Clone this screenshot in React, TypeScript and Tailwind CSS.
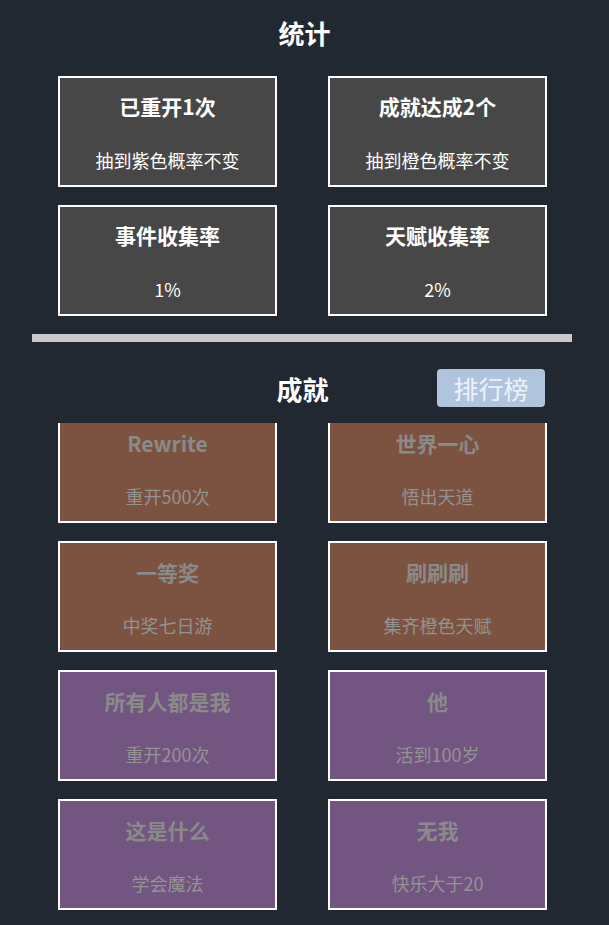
const stats = [
  { title: "已重开1次", desc: "抽到紫色概率不变" },
  { title: "成就达成2个", desc: "抽到橙色概率不变" },
  { title: "事件收集率", desc: "1%" },
  { title: "天赋收集率", desc: "2%" },
];

const achievements = [
  { title: "Rewrite", desc: "重开500次", tone: "orange" },
  { title: "世界一心", desc: "悟出天道", tone: "orange" },
  { title: "一等奖", desc: "中奖七日游", tone: "orange" },
  { title: "刷刷刷", desc: "集齐橙色天赋", tone: "orange" },
  { title: "所有人都是我", desc: "重开200次", tone: "purple" },
  { title: "他", desc: "活到100岁", tone: "purple" },
  { title: "这是什么", desc: "学会魔法", tone: "purple" },
  { title: "无我", desc: "快乐大于20", tone: "purple" },
];

export default function App() {
  return (
    <div
      className="w-full min-h-[925px] h-[925px] overflow-hidden bg-[#222831] text-white"
      style={{ fontFamily: '"Noto Sans CJK SC", "Noto Sans", sans-serif' }}
    >
      <div className="pt-[15px] text-center text-[26px] leading-[36px] font-bold">统计</div>

      {/* Stats */}
      <div className="mt-[25px] ml-[58px] w-[489px] grid grid-cols-2 gap-x-[51px] gap-y-[18px]">
        {stats.map((s) => (
          <div
            key={s.title}
            className="h-[111px] border-2 border-white bg-[#474747] flex flex-col items-center"
          >
            <div className="mt-[13px] text-[21px] leading-[30px] font-bold">{s.title}</div>
            <div className="mt-[26px] text-[18px] leading-[26px]">{s.desc}</div>
          </div>
        ))}
      </div>

      <div className="mt-[18px] ml-[32px] w-[540px] h-[8px] bg-[#c9c9cb]" />

      {/* Achievements header */}
      <div className="mt-[27px] h-[38px] ml-[58px] w-[489px] grid grid-cols-[1fr_auto_1fr] items-center">
        <div />
        <div className="text-[26px] leading-[36px] font-bold pt-[2px]">成就</div>
        <div className="flex justify-end pr-[2px]">
          <button className="w-[108px] h-[38px] rounded-[4px] bg-[#b0c4de] text-[#eef2f8] text-[25px] leading-[38px]">
            排行榜
          </button>
        </div>
      </div>

      {/* Achievement list */}
      <div className="mt-[16px] h-[502px] overflow-hidden">
        <div className="-mt-[11px] ml-[58px] w-[489px] grid grid-cols-2 gap-x-[51px] gap-y-[18px]">
          {achievements.map((a) => (
            <div
              key={a.title}
              className={
                "h-[111px] border-2 border-white flex flex-col items-center " +
                (a.tone === "orange" ? "bg-[#7c5240]" : "bg-[#735582]")
              }
            >
              <div className="mt-[14px] text-[21px] leading-[30px] font-bold text-[#8a8a8a]">
                {a.title}
              </div>
              <div className="mt-[25px] text-[18px] leading-[26px] text-[#939393]">{a.desc}</div>
            </div>
          ))}
        </div>
      </div>
    </div>
  );
}
